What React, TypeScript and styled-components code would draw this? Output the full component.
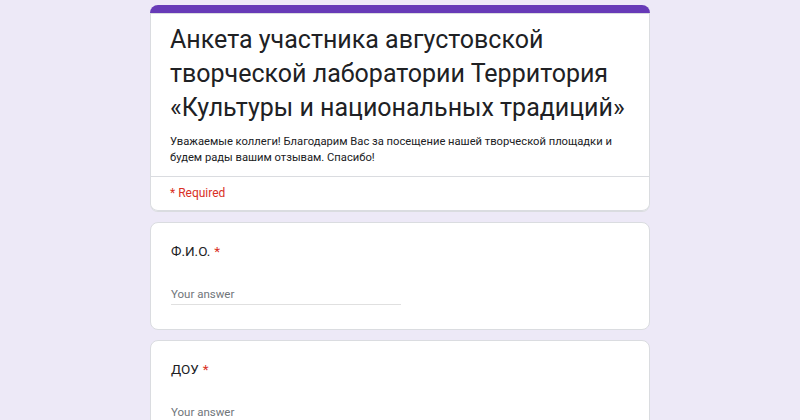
import React from "react";
import styled, { createGlobalStyle } from "styled-components";

const GlobalStyle = createGlobalStyle`
  html, body {
    margin: 0;
    padding: 0;
    background: #ede9f7;
    font-family: Roboto, "Open Sans", Arial, sans-serif;
  }
`;

const Page = styled.div`
  display: flex;
  flex-direction: column;
  align-items: center;
  gap: 10px;
  padding: 5px 0 20px;
`;

const Card = styled.div`
  width: 500px;
  box-sizing: border-box;
  background: #fff;
  border: 1px solid #dadce0;
  border-radius: 8px;
  overflow: hidden;
`;

const HeaderCard = styled(Card)`
  border-top: 8px solid #673ab7;
  border-left: none;
  border-right: none;
  box-shadow: 0 0 0 1px #dadce0 inset;
`;

const HeaderBody = styled.div`
  padding: 10px 20px 10px;
`;

const Title = styled.h1`
  margin: 0;
  font-family: Roboto, "Open Sans", sans-serif;
  font-weight: 400;
  font-size: 25px;
  line-height: 34px;
  color: #202124;
`;

const Description = styled.p`
  margin: 9px 0 0;
  font-size: 11.2px;
  line-height: 16px;
  color: #202124;
`;

const Divider = styled.div`
  height: 1px;
  background: #dadce0;
`;

const RequiredNote = styled.div`
  padding: 8px 20px 10px;
  font-size: 12px;
  line-height: 16px;
  color: #d93025;
`;

const QuestionBody = styled.div`
  padding: 18px 20px 24px;
`;

const Label = styled.div`
  font-size: 13.5px;
  line-height: 20px;
  color: #202124;
`;

const Star = styled.span`
  color: #d93025;
  margin-left: 4px;
`;

const AnswerField = styled.div`
  margin-top: 25px;
  width: 230px;
  padding-bottom: 2px;
  border-bottom: 1px solid #e0e0e0;
  font-size: 11.5px;
  line-height: 16px;
  color: #70757a;
`;

const questions = ["Ф.И.О.", "ДОУ"];

export default function App() {
  return (
    <>
      <GlobalStyle />
      <Page>
        <HeaderCard>
          <HeaderBody>
            <Title>
              Анкета участника августовской творческой лаборатории Территория
              «Культуры и национальных традиций»
            </Title>
            <Description>
              Уважаемые коллеги! Благодарим Вас за посещение нашей творческой
              площадки и будем рады вашим отзывам. Спасибо!
            </Description>
          </HeaderBody>
          <Divider />
          <RequiredNote>* Required</RequiredNote>
        </HeaderCard>
        {questions.map((q) => (
          <Card key={q}>
            <QuestionBody>
              <Label>
                {q}
                <Star>*</Star>
              </Label>
              <AnswerField>Your answer</AnswerField>
            </QuestionBody>
          </Card>
        ))}
      </Page>
    </>
  );
}
